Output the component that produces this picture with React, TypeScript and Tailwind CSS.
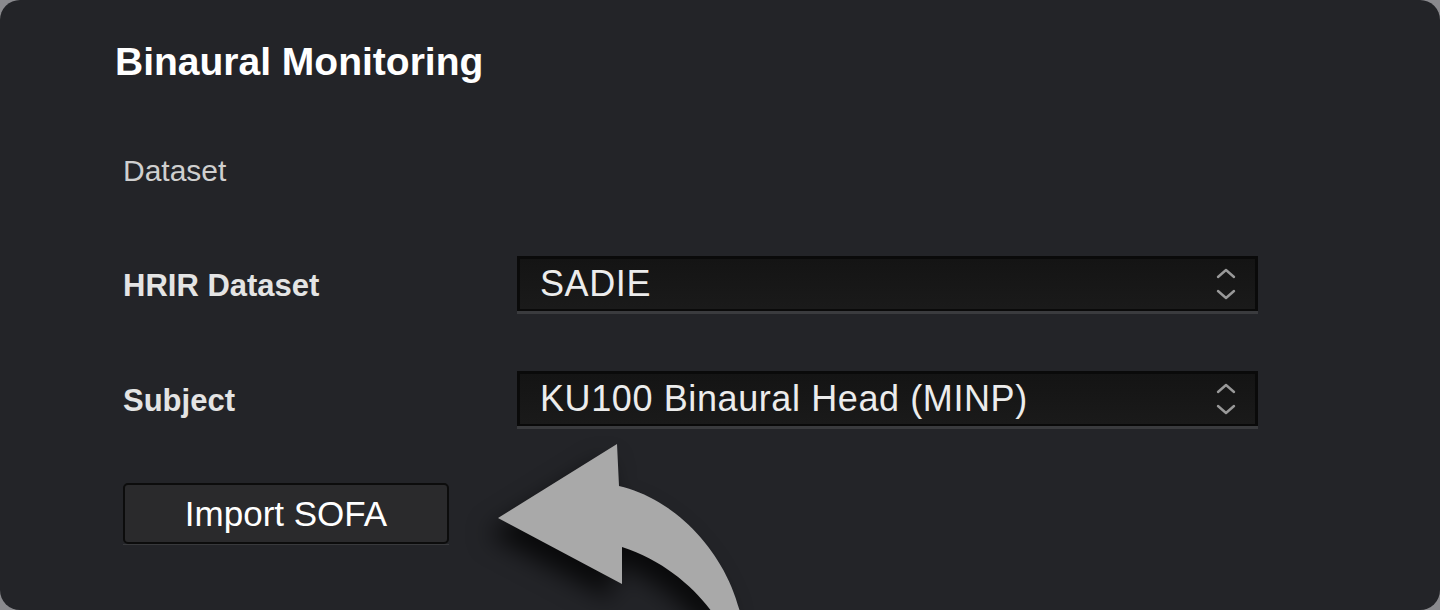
import React from 'react'

const font = { fontFamily: '"Liberation Sans", Arial, sans-serif' }

function Chevrons() {
  return (
    <svg width="22" height="36" viewBox="0 0 22 36" className="shrink-0">
      <polyline points="3,11 11,4 19,11" fill="none" stroke="#999999" strokeWidth="2.4" strokeLinecap="round" strokeLinejoin="round" />
      <polyline points="3,25 11,32 19,25" fill="none" stroke="#999999" strokeWidth="2.4" strokeLinecap="round" strokeLinejoin="round" />
    </svg>
  )
}

function Select({ value }: { value: string }) {
  return (
    <div className="w-[741px] border-b-[3px] border-[#3a3b3e]">
      <div className="flex h-[55px] items-center justify-between border-[3px] border-b-2 border-[#0a0a0a] bg-gradient-to-b from-[#141414] to-[#1a1a1a] pl-[20px] pr-[18px]">
        <span className="text-[36px] leading-none tracking-[0.6px] text-[#ececec]">{value}</span>
        <Chevrons />
      </div>
    </div>
  )
}

function Row({ label, value }: { label: string; value: string }) {
  return (
    <div className="flex items-center">
      <div className="w-[394px] text-[31px] font-bold leading-none text-[#e4e4e4]">{label}</div>
      <Select value={value} />
    </div>
  )
}

export default function App() {
  return (
    <div className="h-[610px] w-[1440px] bg-[#8a8a8e]" style={font}>
      <div className="relative h-[610px] w-[1440px] overflow-hidden rounded-[20px] bg-[#232428]">
        <div className="pl-[115px] pt-[42px]">
          <h1 className="h-[39px] text-[39px] font-bold leading-[39px] text-white">Binaural Monitoring</h1>
        </div>

        <div className="pl-[123px]">
          <div className="mt-[75px] h-[30px] text-[30px] leading-[30px] text-[#cfcfcf]">Dataset</div>

          <div className="mt-[70px] flex flex-col gap-[57px]">
            <Row label="HRIR Dataset" value="SADIE" />
            <Row label="Subject" value="KU100 Binaural Head (MINP)" />
          </div>

          <div className="mt-[54px] w-[326px] border-b border-[#38393c]">
            <button className="flex h-[61px] w-full items-center justify-center rounded-[5px] border-2 border-[#0c0c0c] bg-[#2a2a2c] text-[35px] leading-none text-white">
              Import SOFA
            </button>
          </div>
        </div>

        <svg className="pointer-events-none absolute left-0 top-0 drop-shadow-[-10px_16px_12px_rgba(0,0,0,0.75)]" width="1440" height="610" viewBox="0 0 1440 610">
          <path
            d="M 498 518 L 617 444 L 619 486 C 672 498, 724 548, 740 612 L 712 612 C 692 585, 662 560, 622 547 L 622 584 Z"
            fill="#a9a9a9"
          />
        </svg>
      </div>
    </div>
  )
}
